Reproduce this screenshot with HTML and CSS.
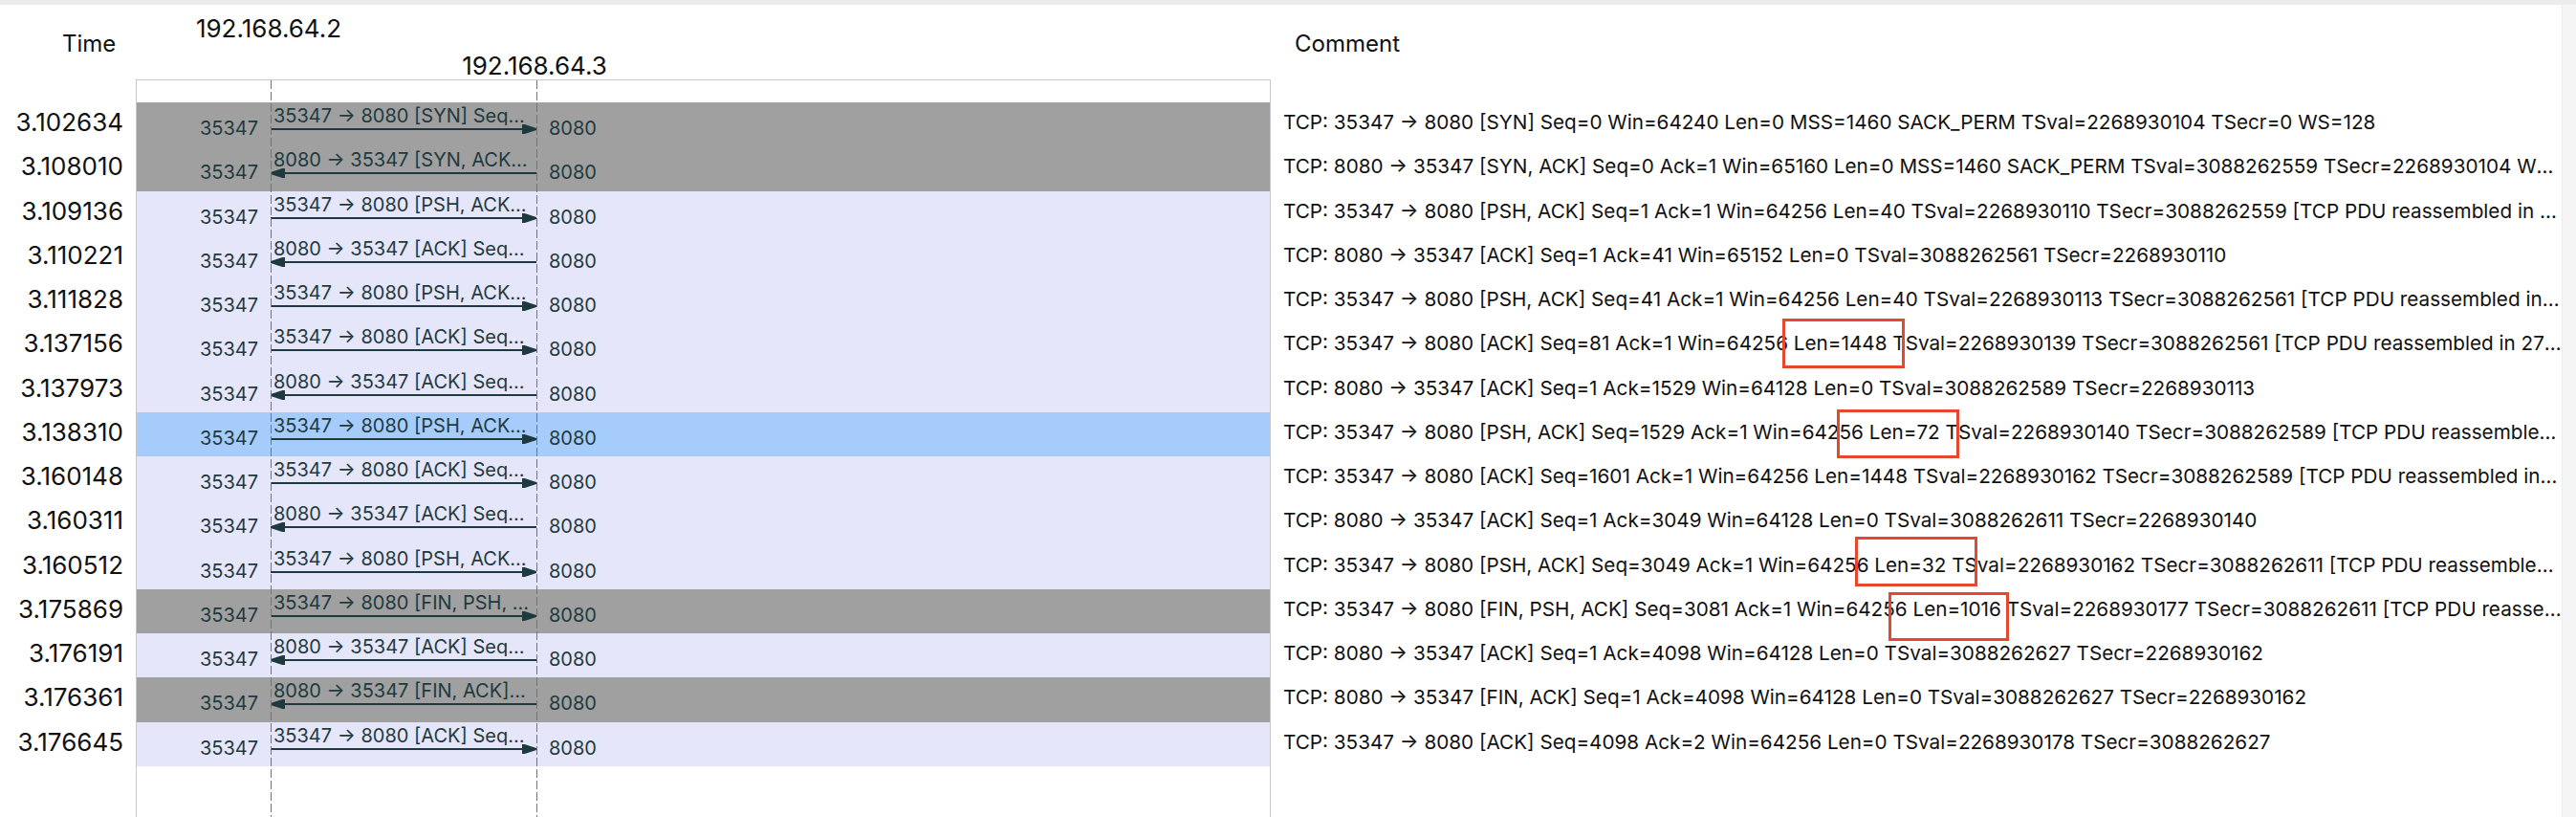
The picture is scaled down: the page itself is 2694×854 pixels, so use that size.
FILE: index.html
```html
<!DOCTYPE html>
<html>
<head>
<meta charset="utf-8">
<link rel="stylesheet" href="styles.css">
</head>
<body>
<div class="topbar"></div>
<div class="page">
  <div class="time-col">
    <div class="hdr time-hdr">Time</div>
    <div class="spacer"></div>
    <div class="t">3.102634</div>
    <div class="t">3.108010</div>
    <div class="t">3.109136</div>
    <div class="t">3.110221</div>
    <div class="t">3.111828</div>
    <div class="t">3.137156</div>
    <div class="t">3.137973</div>
    <div class="t">3.138310</div>
    <div class="t">3.160148</div>
    <div class="t">3.160311</div>
    <div class="t">3.160512</div>
    <div class="t">3.175869</div>
    <div class="t">3.176191</div>
    <div class="t">3.176361</div>
    <div class="t">3.176645</div>
  </div>

  <div class="flow-col">
    <div class="hdr ips">
      <div class="ip ip-a">192.168.64.2</div>
      <div class="ip ip-b">192.168.64.3</div>
    </div>
    <div class="box">
      <div class="box-top"></div>

      <div class="frow gray">
        <div class="port pl">35347</div>
        <div class="msg"><div class="lbl">35347 → 8080 [SYN] Seq=0 Win=64240 Len=0 MSS=1460</div>
          <svg class="arr" viewBox="0 0 278 10" width="278" height="10"><line x1="0" y1="5" x2="266" y2="5"/><polygon points="264,0.5 278,5 264,9.5"/></svg></div>
        <div class="port pr">8080</div>
      </div>
      <div class="frow gray">
        <div class="port pl">35347</div>
        <div class="msg"><div class="lbl">8080 → 35347 [SYN, ACK] Seq=0 Ack=1 Win=65160</div>
          <svg class="arr" viewBox="0 0 278 10" width="278" height="10"><line x1="12" y1="5" x2="278" y2="5"/><polygon points="14,0.5 0,5 14,9.5"/></svg></div>
        <div class="port pr">8080</div>
      </div>
      <div class="frow lav">
        <div class="port pl">35347</div>
        <div class="msg"><div class="lbl">35347 → 8080 [PSH, ACK] Seq=1 Ack=1 Win=64256</div>
          <svg class="arr" viewBox="0 0 278 10" width="278" height="10"><line x1="0" y1="5" x2="266" y2="5"/><polygon points="264,0.5 278,5 264,9.5"/></svg></div>
        <div class="port pr">8080</div>
      </div>
      <div class="frow lav">
        <div class="port pl">35347</div>
        <div class="msg"><div class="lbl">8080 → 35347 [ACK] Seq=1 Ack=41 Win=65152</div>
          <svg class="arr" viewBox="0 0 278 10" width="278" height="10"><line x1="12" y1="5" x2="278" y2="5"/><polygon points="14,0.5 0,5 14,9.5"/></svg></div>
        <div class="port pr">8080</div>
      </div>
      <div class="frow lav">
        <div class="port pl">35347</div>
        <div class="msg"><div class="lbl">35347 → 8080 [PSH, ACK] Seq=41 Ack=1 Win=64256</div>
          <svg class="arr" viewBox="0 0 278 10" width="278" height="10"><line x1="0" y1="5" x2="266" y2="5"/><polygon points="264,0.5 278,5 264,9.5"/></svg></div>
        <div class="port pr">8080</div>
      </div>
      <div class="frow lav">
        <div class="port pl">35347</div>
        <div class="msg"><div class="lbl">35347 → 8080 [ACK] Seq=81 Ack=1 Win=64256</div>
          <svg class="arr" viewBox="0 0 278 10" width="278" height="10"><line x1="0" y1="5" x2="266" y2="5"/><polygon points="264,0.5 278,5 264,9.5"/></svg></div>
        <div class="port pr">8080</div>
      </div>
      <div class="frow lav">
        <div class="port pl">35347</div>
        <div class="msg"><div class="lbl">8080 → 35347 [ACK] Seq=1 Ack=1529 Win=64128</div>
          <svg class="arr" viewBox="0 0 278 10" width="278" height="10"><line x1="12" y1="5" x2="278" y2="5"/><polygon points="14,0.5 0,5 14,9.5"/></svg></div>
        <div class="port pr">8080</div>
      </div>
      <div class="frow sel">
        <div class="port pl">35347</div>
        <div class="msg"><div class="lbl">35347 → 8080 [PSH, ACK] Seq=1529 Ack=1</div>
          <svg class="arr" viewBox="0 0 278 10" width="278" height="10"><line x1="0" y1="5" x2="266" y2="5"/><polygon points="264,0.5 278,5 264,9.5"/></svg></div>
        <div class="port pr">8080</div>
      </div>
      <div class="frow lav">
        <div class="port pl">35347</div>
        <div class="msg"><div class="lbl">35347 → 8080 [ACK] Seq=1601 Ack=1 Win=64256</div>
          <svg class="arr" viewBox="0 0 278 10" width="278" height="10"><line x1="0" y1="5" x2="266" y2="5"/><polygon points="264,0.5 278,5 264,9.5"/></svg></div>
        <div class="port pr">8080</div>
      </div>
      <div class="frow lav">
        <div class="port pl">35347</div>
        <div class="msg"><div class="lbl">8080 → 35347 [ACK] Seq=1 Ack=3049 Win=64128</div>
          <svg class="arr" viewBox="0 0 278 10" width="278" height="10"><line x1="12" y1="5" x2="278" y2="5"/><polygon points="14,0.5 0,5 14,9.5"/></svg></div>
        <div class="port pr">8080</div>
      </div>
      <div class="frow lav">
        <div class="port pl">35347</div>
        <div class="msg"><div class="lbl">35347 → 8080 [PSH, ACK] Seq=3049 Ack=1</div>
          <svg class="arr" viewBox="0 0 278 10" width="278" height="10"><line x1="0" y1="5" x2="266" y2="5"/><polygon points="264,0.5 278,5 264,9.5"/></svg></div>
        <div class="port pr">8080</div>
      </div>
      <div class="frow gray">
        <div class="port pl">35347</div>
        <div class="msg"><div class="lbl">35347 → 8080 [FIN, PSH, ACK] Seq=3081 Ack=1</div>
          <svg class="arr" viewBox="0 0 278 10" width="278" height="10"><line x1="0" y1="5" x2="266" y2="5"/><polygon points="264,0.5 278,5 264,9.5"/></svg></div>
        <div class="port pr">8080</div>
      </div>
      <div class="frow lav">
        <div class="port pl">35347</div>
        <div class="msg"><div class="lbl">8080 → 35347 [ACK] Seq=1 Ack=4098 Win=64128</div>
          <svg class="arr" viewBox="0 0 278 10" width="278" height="10"><line x1="12" y1="5" x2="278" y2="5"/><polygon points="14,0.5 0,5 14,9.5"/></svg></div>
        <div class="port pr">8080</div>
      </div>
      <div class="frow gray">
        <div class="port pl">35347</div>
        <div class="msg"><div class="lbl">8080 → 35347 [FIN, ACK] Seq=1 Ack=4098 Win=64128</div>
          <svg class="arr" viewBox="0 0 278 10" width="278" height="10"><line x1="12" y1="5" x2="278" y2="5"/><polygon points="14,0.5 0,5 14,9.5"/></svg></div>
        <div class="port pr">8080</div>
      </div>
      <div class="frow lav">
        <div class="port pl">35347</div>
        <div class="msg"><div class="lbl">35347 → 8080 [ACK] Seq=4098 Ack=2 Win=64256</div>
          <svg class="arr" viewBox="0 0 278 10" width="278" height="10"><line x1="0" y1="5" x2="266" y2="5"/><polygon points="264,0.5 278,5 264,9.5"/></svg></div>
        <div class="port pr">8080</div>
      </div>
      <div class="box-fill"></div>
    </div>
  </div>

  <div class="comment-col">
    <div class="hdr comment-hdr">Comment</div>
    <div class="spacer"></div>
    <div class="c"><div class="txt">TCP: 35347 → 8080 [SYN] Seq=0 Win=64240 Len=0 MSS=1460 SACK_PERM TSval=2268930104 TSecr=0 WS=128</div></div>
    <div class="c"><div class="txt">TCP: 8080 → 35347 [SYN, ACK] Seq=0 Ack=1 Win=65160 Len=0 MSS=1460 SACK_PERM TSval=3088262559 TSecr=2268930104 WS=128</div></div>
    <div class="c"><div class="txt">TCP: 35347 → 8080 [PSH, ACK] Seq=1 Ack=1 Win=64256 Len=40 TSval=2268930110 TSecr=3088262559 [TCP PDU reassembled in 278]</div></div>
    <div class="c"><div class="txt">TCP: 8080 → 35347 [ACK] Seq=1 Ack=41 Win=65152 Len=0 TSval=3088262561 TSecr=2268930110</div></div>
    <div class="c"><div class="txt">TCP: 35347 → 8080 [PSH, ACK] Seq=41 Ack=1 Win=64256 Len=40 TSval=2268930113 TSecr=3088262561 [TCP PDU reassembled in 278]</div></div>
    <div class="c"><div class="txt">TCP: 35347 → 8080 [ACK] Seq=81 Ack=1 Win=64256 <span class="hl hl1">Len=1448</span> TSval=2268930139 TSecr=3088262561 [TCP PDU reassembled in 2785]</div></div>
    <div class="c"><div class="txt">TCP: 8080 → 35347 [ACK] Seq=1 Ack=1529 Win=64128 Len=0 TSval=3088262589 TSecr=2268930113</div></div>
    <div class="c"><div class="txt">TCP: 35347 → 8080 [PSH, ACK] Seq=1529 Ack=1 Win=64256 <span class="hl hl2">Len=72</span> TSval=2268930140 TSecr=3088262589 [TCP PDU reassembled in 278]</div></div>
    <div class="c"><div class="txt">TCP: 35347 → 8080 [ACK] Seq=1601 Ack=1 Win=64256 Len=1448 TSval=2268930162 TSecr=3088262589 [TCP PDU reassembled in 278]</div></div>
    <div class="c"><div class="txt">TCP: 8080 → 35347 [ACK] Seq=1 Ack=3049 Win=64128 Len=0 TSval=3088262611 TSecr=2268930140</div></div>
    <div class="c"><div class="txt">TCP: 35347 → 8080 [PSH, ACK] Seq=3049 Ack=1 Win=64256 <span class="hl hl3">Len=32</span> TSval=2268930162 TSecr=3088262611 [TCP PDU reassembled in 278]</div></div>
    <div class="c"><div class="txt">TCP: 35347 → 8080 [FIN, PSH, ACK] Seq=3081 Ack=1 Win=64256 <span class="hl hl4">Len=1016</span> TSval=2268930177 TSecr=3088262611 [TCP PDU reassembled in 278]</div></div>
    <div class="c"><div class="txt">TCP: 8080 → 35347 [ACK] Seq=1 Ack=4098 Win=64128 Len=0 TSval=3088262627 TSecr=2268930162</div></div>
    <div class="c"><div class="txt">TCP: 8080 → 35347 [FIN, ACK] Seq=1 Ack=4098 Win=64128 Len=0 TSval=3088262627 TSecr=2268930162</div></div>
    <div class="c"><div class="txt">TCP: 35347 → 8080 [ACK] Seq=4098 Ack=2 Win=64256 Len=0 TSval=2268930178 TSecr=3088262627</div></div>
  </div>

  <div class="scrollbar"></div>
</div>
</body>
</html>
```

FILE: styles.css
```css
* { box-sizing: border-box; }
html, body {
  margin: 0;
  height: 100%;
  overflow: hidden;
  background: #ffffff;
}
body {
  font-family: Inter, "Liberation Sans", sans-serif;
  color: #111111;
}
.topbar {
  height: 5px;
  background: #ececec;
}
.page {
  display: flex;
  height: 849px;
}
.hdr {
  height: 78px;
  flex: none;
}
.spacer {
  height: 24px;
  flex: none;
}

/* time column */
.time-col {
  width: 142px;
  flex: none;
}
.time-hdr {
  padding: 29px 0 0 65px;
  font-size: 24px;
  line-height: 24px;
}
.t {
  height: 46.25px;
  line-height: 41px;
  font-size: 26px;
  text-align: right;
  padding-right: 13px;
  white-space: nowrap;
}

/* flow diagram */
.flow-col {
  width: 1187px;
  flex: none;
  display: flex;
  flex-direction: column;
}
.ips {
  padding-top: 12px;
  font-size: 26px;
  line-height: 26px;
}
.ip {
  width: 200px;
  text-align: center;
  white-space: nowrap;
}
.ip-a { margin-left: 39px; }
.ip-b { margin-left: 317px; margin-top: 13px; }

.box {
  flex: 1;
  position: relative;
  border: 1px solid #c8c8c8;
  border-bottom: none;
  display: flex;
  flex-direction: column;
}
.box::before,
.box::after {
  content: "";
  position: absolute;
  top: 0;
  bottom: 0;
  width: 1px;
  background: repeating-linear-gradient(to bottom, #747474 0 9px, transparent 9px 12px);
}
.box::before { left: 140px; }
.box::after { left: 418px; }
.box-top {
  height: 23px;
  flex: none;
}
.box-fill { flex: 1; }

.frow {
  height: 46.25px;
  flex: none;
  display: grid;
  grid-template-columns: 140px 278px 1fr;
  color: #1f3a3e;
}
.gray { background: #a0a0a0; }
.lav { background: #e6e6fa; }
.sel { background: #a6ccfb; }

.port {
  font-size: 20px;
  line-height: 20px;
  padding-top: 17px;
  white-space: nowrap;
}
.pl { text-align: right; padding-right: 13px; }
.pr { padding-left: 13px; }

.msg {
  padding-top: 4px;
  min-width: 0;
  display: flex;
  flex-direction: column;
}
.lbl {
  font-size: 20px;
  line-height: 20px;
  padding: 0 6px 0 3px;
  white-space: nowrap;
  overflow: hidden;
  text-overflow: ellipsis;
}
.arr {
  display: block;
  margin-top: -1px;
  stroke: #1f3a3e;
  stroke-width: 2;
  fill: #1f3a3e;
}

/* comment column */
.comment-col {
  flex: 1;
  min-width: 0;
  display: flex;
  flex-direction: column;
}
.comment-hdr {
  padding: 29px 0 0 25px;
  font-size: 24px;
  line-height: 24px;
}
.c {
  height: 46.25px;
  flex: none;
  display: flex;
  padding-left: 13px;
}
.txt {
  flex: 1;
  min-width: 0;
  font-size: 20.7px;
  line-height: 42px;
  white-space: nowrap;
  overflow: hidden;
  text-overflow: ellipsis;
  padding: 24px 0;
  margin: -24px 0;
}
.hl { position: relative; }
.hl::after {
  content: "";
  position: absolute;
  border: 3px solid #e5472f;
}
.hl1::after { left: -12px; right: -19px; top: -13px; bottom: -14px; }
.hl2::after { left: -34px; right: -20px; top: -11px; bottom: -15px; }
.hl3::after { left: -20px; right: -33px; top: -17px; bottom: -10px; }
.hl4::after { left: -25px; right: -8px; top: -5px; bottom: -21px; }

.scrollbar {
  width: 15px;
  flex: none;
  background: #f5f5f5;
  border-left: 1px solid #ececec;
}
```
